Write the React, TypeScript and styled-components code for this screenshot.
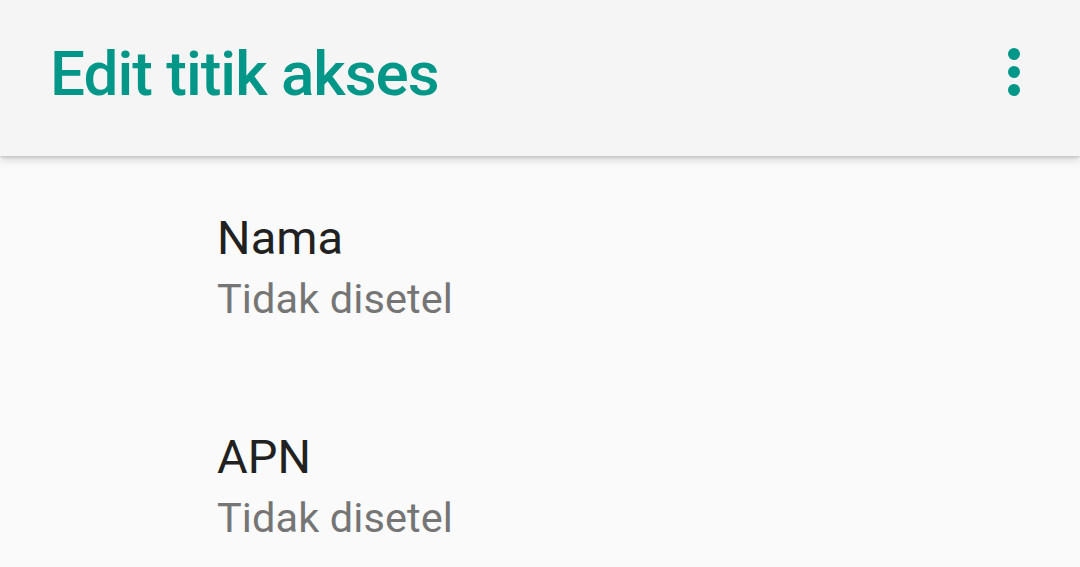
import React from 'react'
import styled, { createGlobalStyle } from 'styled-components'

const GlobalStyle = createGlobalStyle`
    html, body {
        margin: 0;
        padding: 0;
        background: #fafafa;
        font-family: Roboto, "Liberation Sans", sans-serif;
    }
`

const Screen = styled.div`
    width: 1080px;
    height: 567px;
    overflow: hidden;
    background: #fafafa;
    display: flex;
    flex-direction: column;
`

const Toolbar = styled.header`
    position: relative;
    z-index: 1;
    height: 156px;
    flex-shrink: 0;
    box-sizing: border-box;
    padding: 37px 60px 0 50px;
    background: #f5f5f5;
    box-shadow: 0 4px 8px rgba(0, 0, 0, 0.14), 0 1px 3px rgba(0, 0, 0, 0.16);
    display: flex;
    align-items: flex-start;
    justify-content: space-between;
`

const Title = styled.h1`
    margin: 0;
    font-size: 62px;
    line-height: 74px;
    font-weight: 500;
    color: #009688;
    letter-spacing: -1px;
`

const MenuButton = styled.div`
    width: 12px;
    height: 48px;
    margin-top: 11px;
    display: flex;
`

const PrefList = styled.div`
    display: flex;
    flex-direction: column;
`

const PrefItem = styled.div`
    height: 219px;
    box-sizing: border-box;
    padding: 54px 0 0 217px;
    display: flex;
    flex-direction: column;
`

const PrefTitle = styled.div`
    font-size: 47px;
    line-height: 55px;
    color: #212121;
    letter-spacing: 0.1px;
`

const PrefSummary = styled.div`
    margin-top: 9px;
    font-size: 41.5px;
    line-height: 49px;
    color: #757575;
    letter-spacing: 0.1px;
`

const MoreIcon = () => (
    <svg width="12" height="48" viewBox="0 0 12 48">
        <circle cx="6" cy="6" r="6" fill="#009688" />
        <circle cx="6" cy="24" r="6" fill="#009688" />
        <circle cx="6" cy="42" r="6" fill="#009688" />
    </svg>
)

const prefs = [
    { title: 'Nama', summary: 'Tidak disetel' },
    { title: 'APN', summary: 'Tidak disetel' },
]

const App = () => {
    return (
        <Screen>
            <GlobalStyle />
            <Toolbar>
                <Title>Edit titik akses</Title>
                <MenuButton>
                    <MoreIcon />
                </MenuButton>
            </Toolbar>
            <PrefList>
                {prefs.map((p) => (
                    <PrefItem key={p.title}>
                        <PrefTitle>{p.title}</PrefTitle>
                        <PrefSummary>{p.summary}</PrefSummary>
                    </PrefItem>
                ))}
            </PrefList>
        </Screen>
    )
}

export default App
